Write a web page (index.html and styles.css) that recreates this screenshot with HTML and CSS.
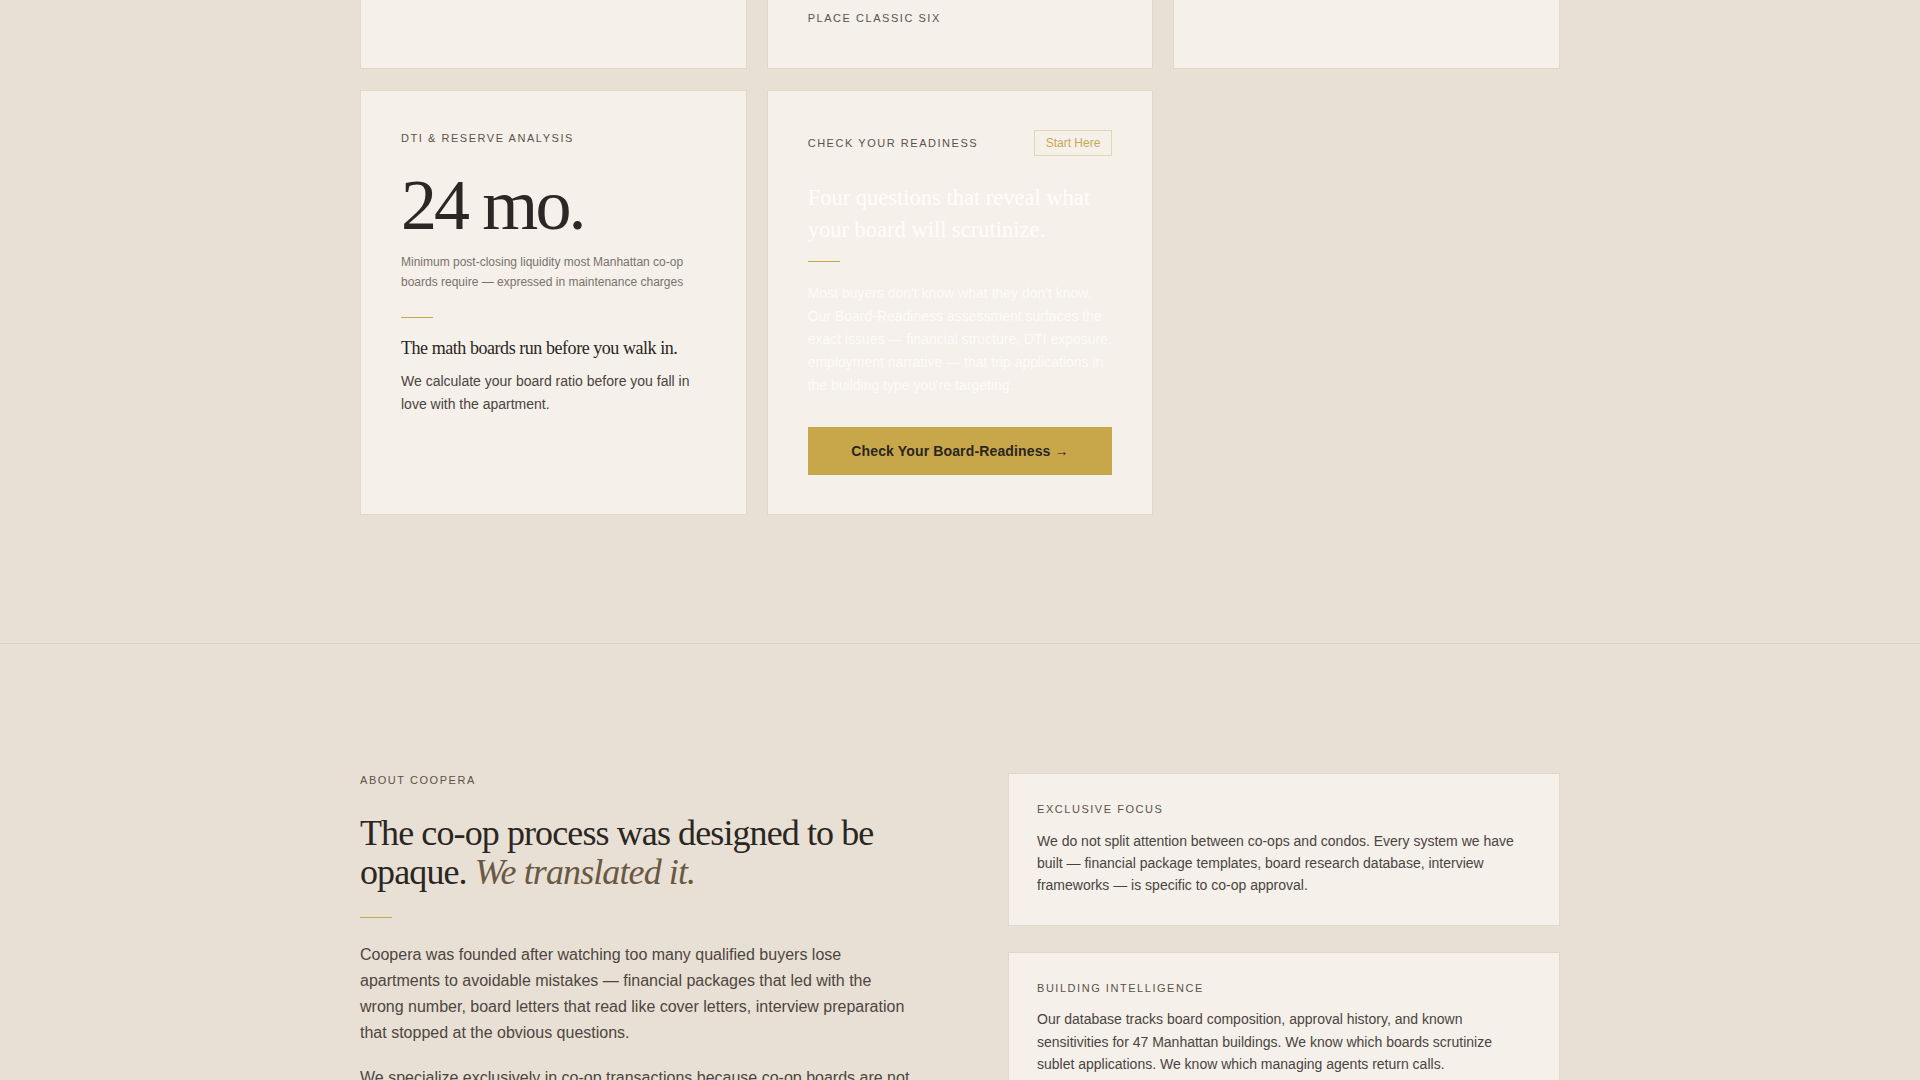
FILE: index.html
```html
<!DOCTYPE html>
<html lang="en">
<head>
<meta charset="utf-8">
<title>Coopera</title>
<link rel="stylesheet" href="styles.css">
</head>
<body>
<section class="services">
  <div class="wrap grid3">
    <div class="card cut"></div>
    <div class="card cut"><p class="label">Place Classic Six</p></div>
    <div class="card cut"></div>

    <div class="card tall">
      <p class="label">DTI &amp; Reserve Analysis</p>
      <div class="stat">24 mo.</div>
      <p class="stat-note">Minimum post-closing liquidity most Manhattan co-op boards require — expressed in maintenance charges</p>
      <div class="rule"></div>
      <h3 class="card-title">The math boards run before you walk in.</h3>
      <p class="card-body">We calculate your board ratio before you fall in love with the apartment.</p>
    </div>

    <div class="card tall">
      <div class="card-head">
        <p class="label">Check Your Readiness</p>
        <span class="badge">Start Here</span>
      </div>
      <h3 class="ghost-title">Four questions that reveal what your board will scrutinize.</h3>
      <div class="rule"></div>
      <p class="ghost-body">Most buyers don't know what they don't know. Our Board-Readiness assessment surfaces the exact issues — financial structure, DTI exposure, employment narrative — that trip applications in the building type you're targeting.</p>
      <a class="cta" href="#">Check Your Board-Readiness →</a>
    </div>
  </div>
</section>

<section class="about">
  <div class="wrap grid2">
    <div class="about-main">
      <p class="label">About Coopera</p>
      <h2 class="about-title">The co-op process was designed to be opaque. <em>We translated it.</em></h2>
      <div class="rule"></div>
      <p class="about-text">Coopera was founded after watching too many qualified buyers lose apartments to avoidable mistakes — financial packages that led with the wrong number, board letters that read like cover letters, interview preparation that stopped at the obvious questions.</p>
      <p class="about-text">We specialize exclusively in co-op transactions because co-op boards are not like condo boards, and the preparation should not be either.</p>
    </div>
    <div class="about-side">
      <div class="card info">
        <p class="label">Exclusive Focus</p>
        <p class="info-body">We do not split attention between co-ops and condos. Every system we have built — financial package templates, board research database, interview frameworks — is specific to co-op approval.</p>
      </div>
      <div class="card info">
        <p class="label">Building Intelligence</p>
        <p class="info-body">Our database tracks board composition, approval history, and known sensitivities for 47 Manhattan buildings. We know which boards scrutinize sublet applications. We know which managing agents return calls.</p>
      </div>
    </div>
  </div>
</section>
</body>
</html>
```

FILE: styles.css
```css
* { box-sizing: border-box; }

html, body {
  margin: 0;
  padding: 0;
  background: #e8e0d5;
  font-family: "Liberation Sans", Arial, sans-serif;
  color: #2a2622;
}

p, h2, h3 { margin: 0; }

.wrap {
  width: 1200px;
  margin: 0 auto;
}

.services {
  padding-bottom: 128px;
  border-bottom: 1px solid #dcd2c5;
}

.grid3 {
  display: grid;
  grid-template-columns: repeat(3, 1fr);
  gap: 21px 20px;
}

.card {
  background: #f5f0ea;
  border: 1px solid #e1d8cc;
}

.card.cut {
  height: 69px;
  border-top: 0;
  padding: 10px 40px 0;
}

.card.tall {
  padding: 39px 40px 39px;
  display: flex;
  flex-direction: column;
}

.label {
  font-size: 11px;
  line-height: 16.5px;
  letter-spacing: 0.14em;
  text-transform: uppercase;
  color: #5b5249;
}

.stat {
  margin-top: 22px;
  font-family: "Liberation Serif", "Times New Roman", serif;
  font-size: 72px;
  line-height: 1;
  letter-spacing: -0.04em;
  color: #2a2724;
}

.stat-note {
  margin-top: 11px;
  font-size: 12px;
  line-height: 20px;
  color: #79726a;
}

.rule {
  width: 32px;
  height: 1px;
  background: #c9a84c;
  margin-top: 25px;
}

.card-title {
  margin-top: 19px;
  font-family: "Liberation Serif", "Times New Roman", serif;
  font-weight: normal;
  font-size: 18px;
  line-height: 1.3;
  letter-spacing: -0.025em;
  color: #2a2622;
}

.card-body {
  margin-top: 10px;
  font-size: 14px;
  line-height: 23px;
  color: #4a443e;
}

.card-head {
  display: flex;
  align-items: center;
  justify-content: space-between;
  height: 26px;
}

.badge {
  font-size: 12px;
  line-height: 16px;
  padding: 4px 11px;
  border: 1px solid #e4d6b3;
  color: #c9a950;
}

.ghost-title {
  margin-top: 26px;
  font-family: "Liberation Serif", "Times New Roman", serif;
  font-weight: normal;
  font-size: 22.5px;
  line-height: 32px;
  color: #fffdf9;
}

.ghost-title + .rule { margin-top: 15px; }

.ghost-body {
  margin-top: 20px;
  font-size: 14px;
  line-height: 23px;
  color: rgba(255, 255, 255, 0.75);
}

.cta {
  margin-top: 30px;
  display: flex;
  align-items: center;
  justify-content: center;
  height: 48px;
  background: #c8a74b;
  color: #2a2520;
  font-size: 14px;
  font-weight: bold;
  text-decoration: none;
  letter-spacing: 0.01em;
}

.about {
  padding-top: 128px;
}

.grid2 {
  display: grid;
  grid-template-columns: 1fr 1fr;
  column-gap: 96px;
  align-items: start;
}

.about-title {
  margin-top: 25px;
  font-family: "Liberation Serif", "Times New Roman", serif;
  font-weight: normal;
  font-size: 36px;
  line-height: 1.1;
  letter-spacing: -0.025em;
  color: #2a2622;
}

.about-title em {
  color: #6a5843;
}

.about-title + .rule { margin-top: 24px; }

.about-text {
  margin-top: 24px;
  font-size: 16px;
  line-height: 26px;
  color: #4d4640;
}

.about-text + .about-text { margin-top: 19px; }

.about-side {
  display: flex;
  flex-direction: column;
  gap: 26px;
  padding-top: 1px;
}

.card.info {
  padding: 27px 28px 28px;
}

.info-body {
  margin-top: 12px;
  font-size: 14px;
  line-height: 22.4px;
  color: #4a443e;
}
```
